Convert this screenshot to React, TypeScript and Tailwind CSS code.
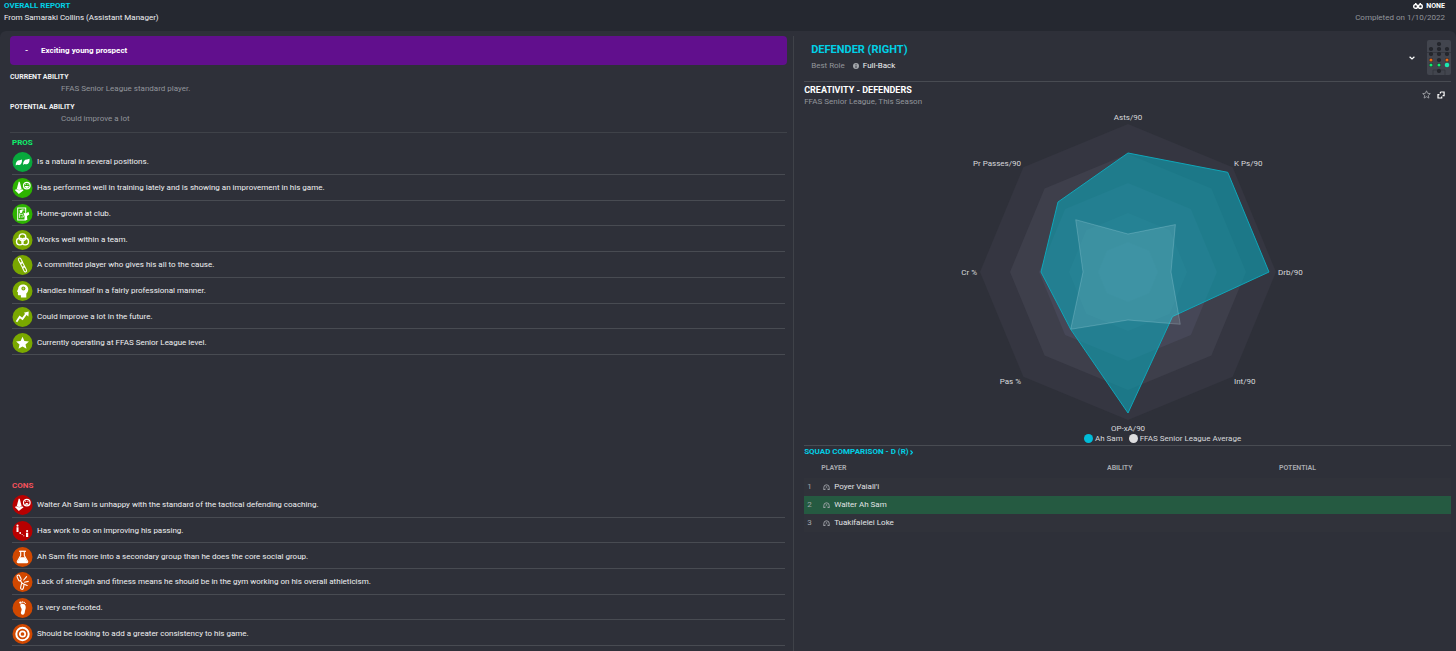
import type { ReactNode } from 'react';

type IconName =
  | 'versatile'
  | 'trainingGood'
  | 'homeGrown'
  | 'teamwork'
  | 'committed'
  | 'professional'
  | 'improve'
  | 'level'
  | 'trainingBad'
  | 'passing'
  | 'social'
  | 'fitness'
  | 'foot'
  | 'consistency';

interface ReportItem {
  icon: IconName;
  tone: string;
  text: string;
}

const pros: ReportItem[] = [
  { icon: 'versatile', tone: 'text-[#08a83c]', text: 'Is a natural in several positions.' },
  {
    icon: 'trainingGood',
    tone: 'text-[#2db300]',
    text: 'Has performed well in training lately and is showing an improvement in his game.',
  },
  { icon: 'homeGrown', tone: 'text-[#2db300]', text: 'Home-grown at club.' },
  { icon: 'teamwork', tone: 'text-[#7aa800]', text: 'Works well within a team.' },
  { icon: 'committed', tone: 'text-[#7aa800]', text: 'A committed player who gives his all to the cause.' },
  { icon: 'professional', tone: 'text-[#7aa800]', text: 'Handles himself in a fairly professional manner.' },
  { icon: 'improve', tone: 'text-[#7aa800]', text: 'Could improve a lot in the future.' },
  { icon: 'level', tone: 'text-[#7aa800]', text: 'Currently operating at FFAS Senior League level.' },
];

const cons: ReportItem[] = [
  {
    icon: 'trainingBad',
    tone: 'text-[#b80000]',
    text: 'Walter Ah Sam is unhappy with the standard of the tactical defending coaching.',
  },
  { icon: 'passing', tone: 'text-[#b80000]', text: 'Has work to do on improving his passing.' },
  {
    icon: 'social',
    tone: 'text-[#d14800]',
    text: 'Ah Sam fits more into a secondary group than he does the core social group.',
  },
  {
    icon: 'fitness',
    tone: 'text-[#d14800]',
    text: 'Lack of strength and fitness means he should be in the gym working on his overall athleticism.',
  },
  { icon: 'foot', tone: 'text-[#d14800]', text: 'Is very one-footed.' },
  { icon: 'consistency', tone: 'text-[#d14800]', text: 'Should be looking to add a greater consistency to his game.' },
];

const cone = (
  <>
    <path d="M6.200 3.800h1l2 7.400c-1.400 1-3.600 1-5 0z" fill="#fff" />
    <path d="M2.300 12l1.500-.7c1.700 1.400 4.100 1.400 5.800 0l1.500.900-4.800 3.700z" fill="#fff" />
  </>
);

// 20x20 drawings, white on the coloured disc
const glyphs: Record<IconName, ReactNode> = {
  versatile: (
    <g fill="#fff">
      <path d="M3.200 13.600c-.1-3.400 1.300-5.400 3.900-5.400l2.300-.8c.4 3.200-.9 5.700-3.600 5.600l-1.200-.300z" />
      <path d="M10.600 12.900c-.1-3.400 1.300-5.400 3.900-5.400l2.500-.8c.3 3.200-1 5.700-3.800 5.600l-1.200-.300z" />
    </g>
  ),
  trainingGood: (
    <>
      {cone}
      <circle cx="14.300" cy="7.600" r="3.300" fill="none" stroke="#fff" strokeWidth="1.200" />
      <path d="M12.200 8.100h4.200c-.2 1.300-1 1.900-2.100 1.900s-1.900-.6-2.100-1.900z" fill="#fff" />
      <path d="M13.200 5.900v1M15.400 5.900v1" stroke="#fff" strokeWidth=".9" />
    </>
  ),
  homeGrown: (
    <>
      <rect x="5.200" y="4" width="8" height="12" fill="none" stroke="#fff" strokeWidth="1" />
      <path d="M7 14V9.500l2-1.200V6h3M7 11l3-1 1 3H8" fill="none" stroke="#fff" strokeWidth=".7" />
      <path d="M7 6.300l3.400-.8-.8 3.300-2.200.2z" fill="#fff" />
      <path d="M10.800 8.600l2.600 1 2.600-1.800.8 2.600-2.300 1.600.3 4H11.900l.2-3.200z" fill="#fff" />
    </>
  ),
  teamwork: (
    <g fill="none" stroke="#fff" strokeWidth="1.400">
      <circle cx="10" cy="7.200" r="3.300" />
      <circle cx="7.300" cy="11.600" r="3.300" />
      <circle cx="12.700" cy="11.600" r="3.300" />
    </g>
  ),
  committed: (
    <g fill="none" stroke="#fff" strokeWidth="1" transform="rotate(-27 10 10)">
      <rect x="8.700" y="2.400" width="2.600" height="6" rx="1.300" />
      <rect x="8.700" y="11.600" width="2.600" height="6" rx="1.300" />
      <rect x="8.700" y="7" width="2.600" height="6" rx="1.300" />
    </g>
  ),
  professional: (
    <>
      <path
        d="M10.600 3.400c3.200 0 5.200 2.300 5.200 4.900 0 1.900-.9 3.200-2 4.300v3.900H8.400v-2.200H6.300c-.7 0-.9-.5-.9-1.100v-2.100l-1-.5 1.200-2.600c.1-2.700 2-4.600 5-4.600z"
        fill="#fff"
      />
      <circle cx="10.900" cy="7.500" r="2" fill="currentColor" />
      <circle cx="10.900" cy="7.500" r=".9" fill="#fff" opacity=".5" />
    </>
  ),
  improve: (
    <>
      <path d="M4 14.800l3.200-4.900 2.800 2 3.700-5" fill="none" stroke="#fff" strokeWidth="1.800" />
      <path d="M11.300 5.700l4.900-1.300-.3 5.100z" fill="#fff" />
    </>
  ),
  level: (
    <path d="M10 3.800l1.900 4.100 4.500.5-3.400 3 1 4.400-4-2.300-4 2.300 1-4.400-3.400-3 4.500-.5z" fill="#fff" />
  ),
  trainingBad: (
    <>
      {cone}
      <circle cx="14.300" cy="7.600" r="3.300" fill="none" stroke="#fff" strokeWidth="1.200" />
      <path d="M12.400 9.700c.3-1.200 1-1.700 1.900-1.700s1.600.5 1.900 1.700z" fill="#fff" />
      <path d="M13.200 5.900v1M15.400 5.900v1" stroke="#fff" strokeWidth=".9" />
    </>
  ),
  passing: (
    <g fill="#fff">
      <circle cx="5" cy="4.700" r="1.100" />
      <path d="M4 6.300h2V11H4zM13.500 11.800h2.200V16h-2.200z" />
      <circle cx="14.600" cy="10.100" r="1.100" />
      <circle cx="7.700" cy="12" r=".9" />
      <circle cx="9.600" cy="13.600" r=".5" />
      <circle cx="11.300" cy="14.800" r=".5" />
    </g>
  ),
  social: (
    <>
      <path d="M6.600 4.300h6.800" stroke="#fff" strokeWidth="1.300" />
      <path
        d="M8.200 4.500v4L4.900 14.300c-.3.700 0 1.300.8 1.300h8.600c.8 0 1.100-.600.8-1.300L11.800 8.500v-4"
        fill="none"
        stroke="#fff"
        strokeWidth="1.100"
      />
      <path d="M7.400 10.300h5.200l2.400 4.900H5z" fill="#fff" />
    </>
  ),
  fitness: (
    <g fill="none" stroke="#fff" strokeWidth="1.100" strokeLinecap="round">
      <rect x="5.200" y="3" width="2.800" height="6" rx="1.400" transform="rotate(-25 6.500 6)" />
      <rect x="8.400" y="11.400" width="2.800" height="6" rx="1.400" transform="rotate(12 9.900 14.400)" />
      <path d="M8 8.700l1.500 2.400M11.200 8l2.900-3.300M12 10.200l3.800-.8M11.700 12.200l3 1.300" />
    </g>
  ),
  foot: (
    <g fill="#fff">
      <path d="M8.100 6.300c1.700-1 4.400-.3 5 1.900.5 2-.5 3.600-.7 5.200-.2 1.700-.6 3.300-2.200 3.300-1.500 0-2.200-1.300-1.700-2.700.5-1.400.9-2.300.4-3.400-.6-1.200-1.700-3.200-.8-4.300z" />
      <circle cx="8" cy="4.600" r="1.200" />
      <circle cx="10.100" cy="4" r=".8" />
      <circle cx="11.700" cy="4.500" r=".7" />
      <circle cx="12.900" cy="5.500" r=".6" />
    </g>
  ),
  consistency: (
    <g fill="none" stroke="#fff">
      <circle cx="10" cy="10" r="6.200" strokeWidth="2" />
      <circle cx="10" cy="10" r="2.700" strokeWidth="1.700" />
    </g>
  ),
};

function ReportList({ items, className }: { items: ReportItem[]; className: string }) {
  return (
    <ul className={`mx-0.5 grid auto-rows-fr ${className}`}>
      {items.map((item) => (
        <li key={item.text} className="flex items-center gap-1 border-b border-[#484b52] pt-0.5">
          <svg viewBox="0 0 20 20" className={`h-5 w-[21px] shrink-0 ${item.tone}`} aria-hidden="true">
            <circle cx="10" cy="10" r="10" fill="currentColor" />
            {glyphs[item.icon]}
          </svg>
          <span className="text-[#f0f0f2]">{item.text}</span>
        </li>
      ))}
    </ul>
  );
}

const ringColors = ['#353641', '#3e3f4b', '#464757', '#4d4f5f', '#535566'];
const ringRadii = [148, 118, 89, 59, 30];

const axes: { label: string; x: number; y: number; anchor: 'start' | 'middle' | 'end' }[] = [
  { label: 'Asts/90', x: 0, y: -152, anchor: 'middle' },
  { label: 'K Ps/90', x: 106, y: -106, anchor: 'start' },
  { label: 'Drb/90', x: 150, y: 3, anchor: 'start' },
  { label: 'Int/90', x: 106, y: 112, anchor: 'start' },
  { label: 'OP-xA/90', x: 0, y: 159, anchor: 'middle' },
  { label: 'Pas %', x: -107, y: 112, anchor: 'end' },
  { label: 'Cr %', x: -151, y: 3, anchor: 'end' },
  { label: 'Pr Passes/90', x: -107, y: -106, anchor: 'end' },
];

// one radius per axis, clockwise from the top
const playerValues = [119, 141, 141, 63, 141, 81, 87, 99];
const averageValues = [38, 67, 43, 74, 48, 81, 45, 74];

function polygon(values: number[]) {
  return values
    .map((r, i) => {
      const angle = (Math.PI / 4) * i;
      return `${(Math.sin(angle) * r).toFixed(1)},${(-Math.cos(angle) * r).toFixed(1)}`;
    })
    .join(' ');
}

function RadarChart() {
  return (
    <svg viewBox="-190 -162 380 322" className="mx-auto h-[322px] w-[380px]" role="img" aria-label="Creativity radar">
      {ringRadii.map((r, i) => (
        <polygon key={r} points={polygon(Array(8).fill(r))} fill={ringColors[i]} />
      ))}
      <polygon points={polygon(playerValues)} fill="#0ba5b8" fillOpacity=".6" stroke="#0fa6b9" />
      <polygon points={polygon(averageValues)} fill="#d8f4ff" fillOpacity=".13" stroke="#d8f4ff" strokeOpacity=".2" />
      {axes.map((axis) => (
        <text key={axis.label} x={axis.x} y={axis.y} textAnchor={axis.anchor} className="fill-[#d8d9dc] text-[8px]">
          {axis.label}
        </text>
      ))}
    </svg>
  );
}

const pitchDots = [
  [12, 4, '#24262c'],
  [4, 9, '#24262c'],
  [12, 9, '#24262c'],
  [20, 9, '#24262c'],
  [4, 14, '#24262c'],
  [12, 14, '#24262c'],
  [20, 14, '#24262c'],
  [4, 20, '#f26a12'],
  [12, 20, '#24262c'],
  [20, 20, '#f26a12'],
  [4, 25, '#12f070'],
  [12, 25, '#12f070'],
  [20, 25, '#1ce8b0'],
  [12, 31, '#24262c'],
] as const;

function PitchMap() {
  return (
    <svg viewBox="0 0 24 35" className="h-[35px] w-6" role="img" aria-label="Positions">
      <rect width="24" height="35" rx="2" fill="#42454e" />
      <path d="M0 12.500h24M6 35v-5h12v5" fill="none" stroke="#2f3139" strokeWidth=".7" />
      {pitchDots.map(([x, y, color]) => (
        <g key={`${x}-${y}`}>
          <circle cx={x} cy={y} r="2.100" fill="#24262c" />
          <circle cx={x} cy={y} r={color === '#1ce8b0' ? 2.3 : 1.6} fill={color} />
        </g>
      ))}
    </svg>
  );
}

function PersonIcon() {
  return (
    <svg viewBox="0 0 7 7" className="h-[7px] w-[7px]" fill="none" stroke="#a3a6ab" strokeWidth=".9" aria-hidden="true">
      <path d="M.8 5.500V3.500a2.700 2.700 0 0 1 5.400 0V5.500" />
      <path d="M.5 5.500h1.700V4.600M4.800 4.600v.9h1.700" />
      <circle cx="3.500" cy="3" r=".6" strokeWidth=".6" />
    </svg>
  );
}

const squad = ["Poyer Vaiali'i", 'Walter Ah Sam', 'Tuakifalelei Loke'];

function SquadTable() {
  return (
    <table className="w-full table-fixed border-collapse text-left">
      <colgroup>
        <col className="w-[17px]" />
        <col />
        <col className="w-[172px]" />
        <col className="w-[172px]" />
      </colgroup>
      <thead>
        <tr className="h-5 text-[7px] text-[#a9abb0]">
          <th aria-label="Rank" />
          <th className="font-semibold">PLAYER</th>
          <th className="font-semibold">ABILITY</th>
          <th className="font-semibold">POTENTIAL</th>
        </tr>
      </thead>
      <tbody>
        {squad.map((name, i) => (
          <tr key={name} className={`h-[18px] ${name === 'Walter Ah Sam' ? 'bg-[#255a41]' : 'bg-[#30323a]'}`}>
            <td className="pl-[3px] text-[#a3a6ab]">{i + 1}</td>
            <td>
              <span className="flex items-center gap-1 pl-0.5 text-[#e2e3e5]">
                <PersonIcon />
                {name}
              </span>
            </td>
            <td />
            <td />
          </tr>
        ))}
      </tbody>
    </table>
  );
}

export default function App() {
  return (
    <div className="flex min-h-screen flex-col bg-[#252830] font-['Roboto',sans-serif] text-[8px] leading-3 text-white">
      <header className="flex h-[31px] justify-between pl-1 pr-[11px]">
        <div>
          <h1 className="font-bold text-[#00d0e6]">OVERALL REPORT</h1>
          <p className="text-[#f0f0f2]">From Samaraki Collins (Assistant Manager)</p>
        </div>
        <div className="text-right">
          <p className="flex items-center justify-end gap-[3px] text-[7px] font-bold">
            <svg viewBox="0 0 10 6" className="h-1.5 w-2.5" fill="none" stroke="#fff" strokeWidth="1.400" aria-hidden="true">
              <circle cx="2.600" cy="3.400" r="1.900" />
              <circle cx="7.400" cy="3.400" r="1.900" />
              <path d="M2 .8h1.500M6.500.8H8" />
            </svg>
            NONE
          </p>
          <p className="text-[#92959b]">Completed on 1/10/2022</p>
        </div>
      </header>

      <main className="grid flex-1 grid-cols-[6fr_5fr] rounded-t-md bg-[#2e3039] pt-[5px]">
        <section className="flex flex-col border-r border-[#3f4249] pb-[5px] pl-2.5 pr-1.5">
          <div className="flex h-[29px] items-center rounded bg-[#610f8d] pl-[15px] font-bold">
            <span className="w-4">-</span>
            <span>Exciting young prospect</span>
          </div>

          <dl className="mt-1.5 border-b border-[#3f4249] pb-[7px]">
            <dt className="text-[7px] font-bold text-[#f0f0f2]">CURRENT ABILITY</dt>
            <dd className="pl-[51px] text-[#92959b]">FFAS Senior League standard player.</dd>
            <dt className="mt-1.5 text-[7px] font-bold text-[#f0f0f2]">POTENTIAL ABILITY</dt>
            <dd className="pl-[51px] text-[#92959b]">Could improve a lot</dd>
          </dl>

          <h2 className="ml-0.5 mt-1 font-bold text-[#0ff06c]">PROS</h2>
          <ReportList items={pros} className="h-[206px]" />

          <h2 className="ml-0.5 mt-auto font-bold text-[#f5525c]">CONS</h2>
          <ReportList items={cons} className="h-[154px]" />
        </section>

        <section className="flex flex-col pl-2.5 pr-[5px]">
          <div className="flex h-[46px] items-center border-b border-[#484b52] pb-0.5">
            <div className="flex-1 pl-[7px]">
              <h2 className="text-[11px] font-bold leading-4 text-[#00d0e6]">DEFENDER (RIGHT)</h2>
              <p className="flex items-center leading-4 text-[#92959b]">
                Best Role
                <svg viewBox="0 0 6 6" className="ml-2 mr-1 h-1.5 w-1.5" aria-hidden="true">
                  <circle cx="3" cy="3" r="3" fill="#a3a6ab" />
                  <path d="M3 1v.9M3 2.500V5" stroke="#2e3039" strokeWidth=".9" />
                </svg>
                <span className="text-[#f0f0f2]">Full-Back</span>
              </p>
            </div>
            <button type="button" aria-label="Choose position" className="mr-3">
              <svg viewBox="0 0 6 4" className="h-1 w-1.5" fill="none" stroke="#fff" strokeWidth="1.200">
                <path d="M.6.700L3 3 5.400.700" />
              </svg>
            </button>
            <PitchMap />
          </div>

          <div className="flex h-7 items-start justify-between pt-0.5">
            <div>
              <h3 className="text-[9px] font-bold leading-3">CREATIVITY - DEFENDERS</h3>
              <p className="text-[#92959b]">FFAS Senior League, This Season</p>
            </div>
            <div className="flex items-center gap-1.5 pr-1.5 pt-1.5">
              <button type="button" aria-label="Favourite">
                <svg viewBox="0 0 9 9" className="h-[9px] w-[9px]" fill="none" stroke="#a9abb0" strokeWidth=".8">
                  <path d="M4.500.8l1.100 2.500 2.700.3-2 1.800.6 2.700-2.400-1.400-2.400 1.400.6-2.700-2-1.800 2.700-.3z" />
                </svg>
              </button>
              <button type="button" aria-label="Expand">
                <svg viewBox="0 0 8 8" className="h-2 w-2" fill="none" stroke="#fff" strokeWidth="1.200">
                  <path d="M3.400 1h3.700v3.700H5.600M3.400 1v1.400M2.400 3.600H1V7h3.700V5.600" />
                </svg>
              </button>
            </div>
          </div>

          <RadarChart />

          <div className="flex h-[13px] justify-center gap-1.5 pl-[70px] text-[#d8d9dc]">
            <span className="flex h-[13px] items-center gap-0.5">
              <span className="h-[9px] w-[9px] rounded-full bg-[#00bcd8]" />
              Ah Sam
            </span>
            <span className="flex h-[13px] items-center gap-0.5">
              <span className="h-[9px] w-[9px] rounded-full bg-[#dedee0]" />
              FFAS Senior League Average
            </span>
          </div>

          <div className="border-t border-[#484b52]">
            <a href="#squad" className="flex items-center gap-px font-bold text-[#00d0e6]">
              SQUAD COMPARISON - D (R)
              <svg viewBox="0 0 3 5" className="h-[5px] w-[3px]" fill="none" stroke="currentColor" strokeWidth="1.200">
                <path d="M.5.500l2 2-2 2" />
              </svg>
            </a>
            <SquadTable />
          </div>
        </section>
      </main>
    </div>
  );
}
